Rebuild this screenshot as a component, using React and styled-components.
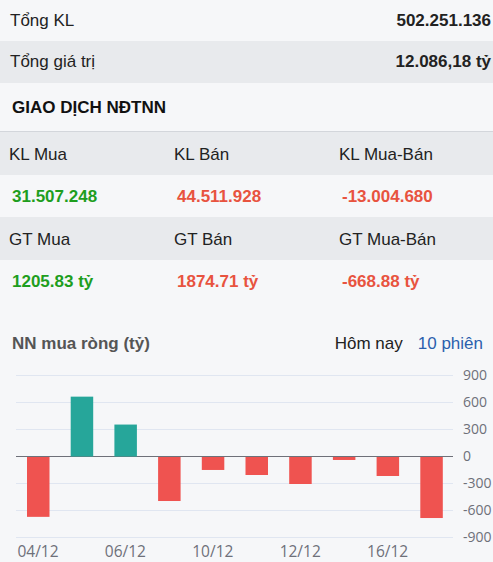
import React from 'react'
import styled, { createGlobalStyle } from 'styled-components'

const Global = createGlobalStyle`
  body {
    margin: 0;
    background: #f6f7f9;
    font-family: "Liberation Sans", Arial, sans-serif;
    color: #222;
  }
`

const Page = styled.div`
  width: 493px;
  height: 562px;
  overflow: hidden;
  background: #f6f7f9;
`

const SumRow = styled.div`
  display: flex;
  justify-content: space-between;
  align-items: center;
  height: ${(p) => p.h}px;
  padding: 0 2px 0 10px;
  box-sizing: border-box;
  background: ${(p) => (p.shade ? '#e8eaed' : '#f6f7f9')};
  font-size: 17px;
`

const SumValue = styled.span`
  font-weight: bold;
`

const Heading = styled.div`
  height: 49px;
  display: flex;
  align-items: center;
  padding: 1px 0 0 12px;
  box-sizing: border-box;
  font-size: 17px;
  font-weight: bold;
  color: #111;
  border-bottom: 1px solid #d3d6db;
`

const Grid = styled.div`
  display: grid;
  grid-template-columns: 165px 165px 1fr;
  align-items: center;
  height: ${(p) => p.h}px;
  padding-top: 2px;
  box-sizing: border-box;
  background: ${(p) => (p.shade ? '#e8eaed' : '#f6f7f9')};
  font-size: 17px;
`

const Label = styled.span`
  padding-left: 9px;
  color: #222;
`

const Value = styled.span`
  padding-left: 12px;
  font-weight: bold;
  color: ${(p) => (p.up ? '#1e9e1e' : '#e8533f')};
`

const ChartHead = styled.div`
  display: flex;
  align-items: center;
  height: 59px;
  padding: 24px 10px 0 12px;
  box-sizing: border-box;
  font-size: 17px;
`

const ChartTitle = styled.span`
  font-weight: bold;
  color: #555;
  flex: 1;
`

const Tab = styled.span`
  margin-left: 15px;
  color: ${(p) => (p.active ? '#2b5fad' : '#222')};
`

const Chart = styled.svg`
  display: block;
  font-family: "Open Sans", "Noto Sans", sans-serif;
`

const bars = [-665, 665, 355, -489, -144, -200, -300, -33, -211, -678]
const ticks = [900, 600, 300, 0, -300, -600, -900]
const xLabels = [['04/12', 0], ['06/12', 2], ['10/12', 4], ['12/12', 6], ['16/12', 8]]
const zeroY = 95
const scale = 27 / 300

const NetChart = () => (
  <Chart width="493" height="200">
    {ticks.map((t, i) => (
      <g key={t}>
        <line
          x1="16"
          x2="453"
          y1={14 + i * 27 + 0.5}
          y2={14 + i * 27 + 0.5}
          stroke={t === 0 ? '#6e7079' : '#e0e6f1'}
          strokeWidth="1"
        />
        <text x="463" y={14 + i * 27 + 5} fontSize="14" fill="#6e7079">
          {t}
        </text>
      </g>
    ))}
    {bars.map((v, i) => {
      const h = Math.abs(v) * scale
      const x = 27 + i * 43.7
      return (
        <rect
          key={i}
          x={x}
          width="22.5"
          y={v > 0 ? zeroY - h + 0.5 : zeroY + 1}
          height={h}
          fill={v > 0 ? '#26a69a' : '#ef5350'}
        />
      )
    })}
    {xLabels.map(([l, i]) => (
      <text key={l} x={38 + i * 43.7} y="196" fontSize="15.5" fill="#6e7079" textAnchor="middle">
        {l}
      </text>
    ))}
  </Chart>
)

const App = () => {
  return (
    <Page>
      <Global />
      <SumRow h={41}>
        <span>Tổng KL</span>
        <SumValue>502.251.136</SumValue>
      </SumRow>
      <SumRow h={42} shade>
        <span>Tổng giá trị</span>
        <SumValue>12.086,18 tỷ</SumValue>
      </SumRow>
      <Heading>GIAO DỊCH NĐTNN</Heading>
      <Grid h={43} shade>
        <Label>KL Mua</Label>
        <Label>KL Bán</Label>
        <Label>KL Mua-Bán</Label>
      </Grid>
      <Grid h={42}>
        <Value up>31.507.248</Value>
        <Value>44.511.928</Value>
        <Value>-13.004.680</Value>
      </Grid>
      <Grid h={43} shade>
        <Label>GT Mua</Label>
        <Label>GT Bán</Label>
        <Label>GT Mua-Bán</Label>
      </Grid>
      <Grid h={42}>
        <Value up>1205.83 tỷ</Value>
        <Value>1874.71 tỷ</Value>
        <Value>-668.88 tỷ</Value>
      </Grid>
      <ChartHead>
        <ChartTitle>NN mua ròng (tỷ)</ChartTitle>
        <Tab>Hôm nay</Tab>
        <Tab active>10 phiên</Tab>
      </ChartHead>
      <NetChart />
    </Page>
  )
}

export default App
